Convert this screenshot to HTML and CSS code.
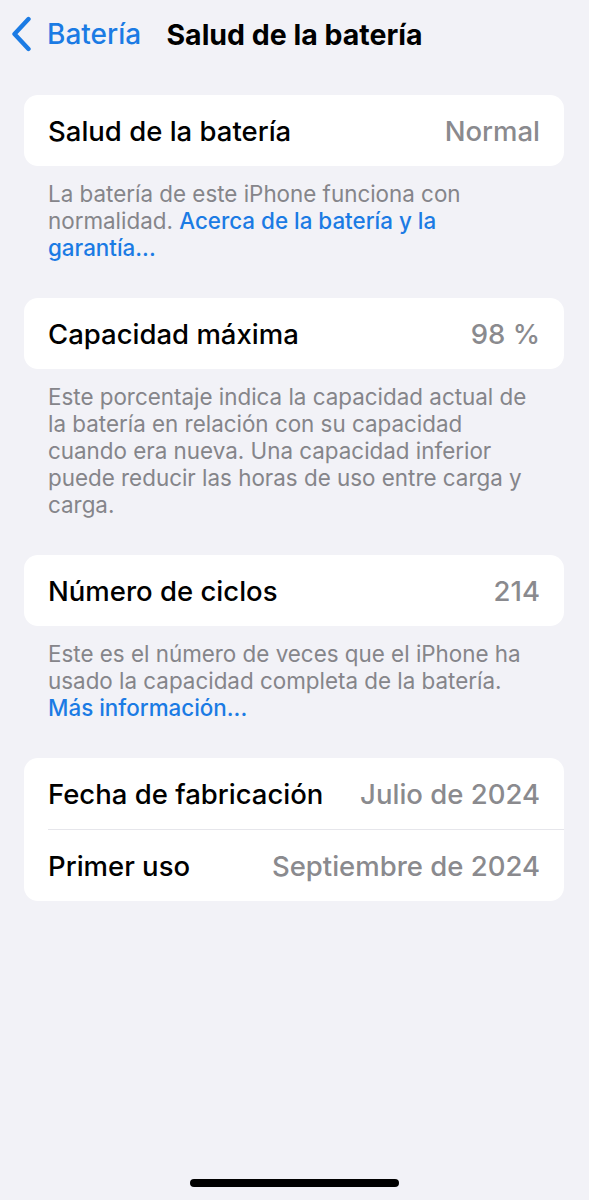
FILE: index.html
```html
<!DOCTYPE html>
<html lang="es">
<head>
<meta charset="utf-8">
<title>Salud de la batería</title>
<link rel="stylesheet" href="styles.css">
</head>
<body>
<div class="screen">
  <header class="navbar">
    <a class="back" href="#">
      <svg class="chevron" width="22" height="36" viewBox="0 0 22 36" aria-hidden="true">
        <path d="M17.5 3 L3.5 18 L17.5 33" fill="none" stroke="currentColor" stroke-width="4.4" stroke-linecap="round" stroke-linejoin="round"/>
      </svg>
      <span class="back-label">Batería</span>
    </a>
    <h1 class="title">Salud de la batería</h1>
    <span></span>
  </header>

  <main class="content">
    <section class="group">
      <div class="card">
        <div class="row"><span class="label">Salud de la batería</span><span class="value">Normal</span></div>
      </div>
      <p class="note">La batería de este iPhone funciona con normalidad. <a href="#" class="link">Acerca de la batería y la garantía...</a></p>
    </section>

    <section class="group">
      <div class="card">
        <div class="row"><span class="label">Capacidad máxima</span><span class="value">98 %</span></div>
      </div>
      <p class="note">Este porcentaje indica la capacidad actual de la batería en relación con su capacidad cuando era nueva. Una capacidad inferior puede reducir las horas de uso entre carga y carga.</p>
    </section>

    <section class="group">
      <div class="card">
        <div class="row"><span class="label">Número de ciclos</span><span class="value">214</span></div>
      </div>
      <p class="note">Este es el número de veces que el iPhone ha usado la capacidad completa de la batería. <a href="#" class="link">Más información...</a></p>
    </section>

    <section class="group">
      <div class="card">
        <div class="row"><span class="label">Fecha de fabricación</span><span class="value">Julio de 2024</span></div>
        <div class="row"><span class="label">Primer uso</span><span class="value">Septiembre de 2024</span></div>
      </div>
    </section>
  </main>

  <div class="home-indicator"></div>
</div>
</body>
</html>
```

FILE: styles.css
```css
* {
  box-sizing: border-box;
}

html, body {
  margin: 0;
  padding: 0;
  background: #f2f2f7;
}

body {
  font-family: Inter, "Noto Sans", "Liberation Sans", sans-serif;
  color: #000;
  -webkit-font-smoothing: antialiased;
}

.screen {
  min-height: 1200px;
  display: flex;
  flex-direction: column;
}

/* navigation bar */
.navbar {
  display: grid;
  grid-template-columns: 1fr auto 1fr;
  align-items: center;
  height: 68px;
}

.back {
  display: flex;
  align-items: center;
  gap: 14px;
  padding-left: 11px;
  color: #1b7be4;
  text-decoration: none;
}

.chevron {
  display: block;
}

.back-label {
  font-size: 28px;
  font-weight: 500;
}

.title {
  margin: 0;
  font-size: 28.5px;
  font-weight: 700;
  white-space: nowrap;
}

/* grouped list */
.content {
  padding: 27px 25px 0 24px;
}

.group {
  margin-bottom: 37.5px;
}

.card {
  background: #fff;
  border-radius: 14px;
  overflow: hidden;
}

.row {
  display: flex;
  justify-content: space-between;
  align-items: center;
  height: 71px;
  padding: 0 24px;
  font-size: 27.5px;
  font-weight: 500;
}

.row + .row {
  height: 72px;
  border-top: 1px solid #e6e6eb;
  margin-left: 24px;
  padding-left: 0;
}

.label {
  color: #000;
}

.value {
  color: #8a8a8e;
}

.note {
  margin: 13.5px 24px 0;
  font-size: 22.4px;
  line-height: 27px;
  color: #85858a;
}

.link {
  color: #1b7be4;
  text-decoration: none;
  font-weight: 500;
}

/* home indicator */
.home-indicator {
  margin: auto auto 13px;
  width: 209px;
  height: 8px;
  border-radius: 4px;
  background: #000;
}
```
